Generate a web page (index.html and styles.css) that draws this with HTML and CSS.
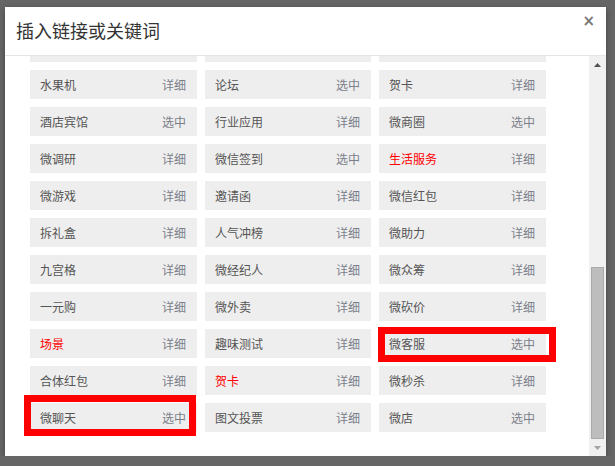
FILE: index.html
```html
<!DOCTYPE html>
<html lang="zh-CN">
<head>
  <meta charset="UTF-8">
  <title>插入链接或关键词</title>
  <link rel="stylesheet" href="styles.css">
</head>
<body>

  <!-- Link picker dialog -->
  <div class="modal">
    <div class="modal-header">
      <div class="modal-title">插入链接或关键词</div>
      <span class="close">&times;</span>
    </div>

    <div class="modal-body">
      <div class="list-view">
        <div class="link-grid">
          <!-- row scrolled mostly out of view -->
          <div class="link-item"></div>
          <div class="link-item"></div>
          <div class="link-item"></div>

          <div class="link-item"><span class="name">水果机</span><span class="action">详细</span></div>
          <div class="link-item"><span class="name">论坛</span><span class="action">选中</span></div>
          <div class="link-item"><span class="name">贺卡</span><span class="action">详细</span></div>

          <div class="link-item"><span class="name">酒店宾馆</span><span class="action">选中</span></div>
          <div class="link-item"><span class="name">行业应用</span><span class="action">详细</span></div>
          <div class="link-item"><span class="name">微商圈</span><span class="action">选中</span></div>

          <div class="link-item"><span class="name">微调研</span><span class="action">详细</span></div>
          <div class="link-item"><span class="name">微信签到</span><span class="action">选中</span></div>
          <div class="link-item"><span class="name hot">生活服务</span><span class="action">详细</span></div>

          <div class="link-item"><span class="name">微游戏</span><span class="action">详细</span></div>
          <div class="link-item"><span class="name">邀请函</span><span class="action">详细</span></div>
          <div class="link-item"><span class="name">微信红包</span><span class="action">详细</span></div>

          <div class="link-item"><span class="name">拆礼盒</span><span class="action">详细</span></div>
          <div class="link-item"><span class="name">人气冲榜</span><span class="action">详细</span></div>
          <div class="link-item"><span class="name">微助力</span><span class="action">详细</span></div>

          <div class="link-item"><span class="name">九宫格</span><span class="action">详细</span></div>
          <div class="link-item"><span class="name">微经纪人</span><span class="action">详细</span></div>
          <div class="link-item"><span class="name">微众筹</span><span class="action">详细</span></div>

          <div class="link-item"><span class="name">一元购</span><span class="action">详细</span></div>
          <div class="link-item"><span class="name">微外卖</span><span class="action">详细</span></div>
          <div class="link-item"><span class="name">微砍价</span><span class="action">详细</span></div>

          <div class="link-item"><span class="name hot">场景</span><span class="action">详细</span></div>
          <div class="link-item"><span class="name">趣味测试</span><span class="action">详细</span></div>
          <div class="link-item marked mark-b"><span class="name">微客服</span><span class="action">选中</span></div>

          <div class="link-item"><span class="name">合体红包</span><span class="action">详细</span></div>
          <div class="link-item"><span class="name hot">贺卡</span><span class="action">详细</span></div>
          <div class="link-item"><span class="name">微秒杀</span><span class="action">详细</span></div>

          <div class="link-item marked mark-a"><span class="name">微聊天</span><span class="action">选中</span></div>
          <div class="link-item"><span class="name">图文投票</span><span class="action">详细</span></div>
          <div class="link-item"><span class="name">微店</span><span class="action">选中</span></div>
        </div>
      </div>

      <!-- scrollbar, scrolled to the end -->
      <div class="scrollbar">
        <div class="scroll-btn">
          <svg width="7" height="4" viewBox="0 0 7 4"><path d="M0 4L3.5 0L7 4Z" fill="#505050"/></svg>
        </div>
        <div class="scroll-track">
          <div class="scroll-thumb"></div>
        </div>
        <div class="scroll-btn">
          <svg width="7" height="4" viewBox="0 0 7 4"><path d="M0 0L3.5 4L7 0Z" fill="#a3a3a3"/></svg>
        </div>
      </div>
    </div>
  </div>

</body>
</html>
```

FILE: styles.css
```css
body {
  margin: 0;
  background-color: #666;
  font-family: "Noto Sans CJK SC", "Noto Sans", sans-serif;
}

.modal {
  margin: 7px 0 0 5px;
  width: 601px;
  height: 449px;
  background-color: #fff;
  box-shadow: 0 2px 6px rgba(0, 0, 0, 0.35);
  display: flex;
  flex-direction: column;
}

.modal-header {
  height: 48px;
  flex-shrink: 0;
  border-bottom: 1px solid #e5e5e5;
  display: flex;
  align-items: center;
  justify-content: space-between;
  padding: 0 11px 2px 11px;
  box-sizing: border-box;
  height: 49px;
}

.modal-title {
  font-size: 18px;
  color: #333;
  line-height: 1;
}

.close {
  align-self: flex-start;
  margin-top: 7px;
  font-family: "DejaVu Sans", sans-serif;
  font-size: 15px;
  font-weight: bold;
  color: #777;
  line-height: 1;
  cursor: pointer;
}

.modal-body {
  flex: 1;
  display: flex;
  min-height: 0;
}

.list-view {
  flex: 1;
  overflow: hidden;
  display: flex;
  flex-direction: column;
  justify-content: flex-end;
}

.link-grid {
  display: grid;
  grid-template-columns: 167px 166px 167px;
  grid-auto-rows: 29px;
  column-gap: 8px;
  row-gap: 8px;
  padding: 0 0 24px 25px;
}

.link-item {
  position: relative;
  background-color: #eee;
  display: flex;
  align-items: center;
  justify-content: space-between;
  padding: 0 11px 0 10px;
  font-size: 12px;
  line-height: 1;
}

.name {
  color: #555;
}

.name.hot {
  color: #f00;
}

.action {
  color: #7b7f8a;
  cursor: pointer;
}

/* red annotation frames */
.marked::after {
  content: "";
  position: absolute;
  border: 7px solid #f00;
}

.mark-a::after {
  top: -8px;
  left: -6px;
  right: 1px;
  bottom: -4px;
}

.mark-b::after {
  top: -2px;
  left: -1px;
  right: -10px;
  bottom: -4px;
}

/* classic scrollbar */
.scrollbar {
  width: 17px;
  background-color: #f0f0f0;
  display: flex;
  flex-direction: column;
}

.scroll-btn {
  height: 17px;
  display: flex;
  align-items: center;
  justify-content: center;
}

.scroll-track {
  flex: 1;
  display: flex;
  flex-direction: column;
  justify-content: flex-end;
}

.scroll-thumb {
  height: 172px;
  margin: 0 2px;
  background-color: #bdbdbd;
  border: 1px solid #a9a9a9;
  box-sizing: border-box;
}
```
